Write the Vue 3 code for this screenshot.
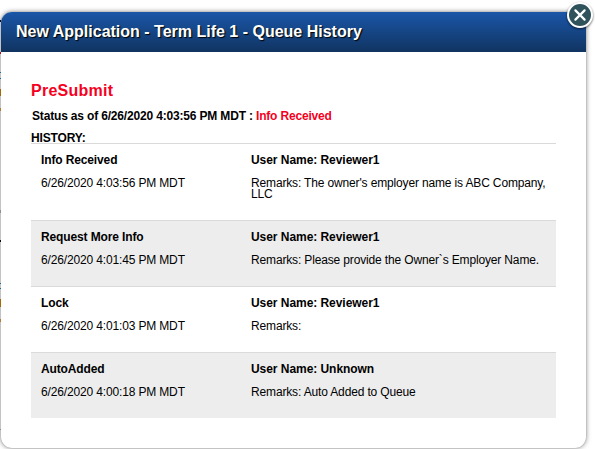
<script setup>
const entries = [
  { action: 'Info Received', time: '6/26/2020 4:03:56 PM MDT', user: 'Reviewer1', remarks: "The owner's employer name is ABC Company, LLC" },
  { action: 'Request More Info', time: '6/26/2020 4:01:45 PM MDT', user: 'Reviewer1', remarks: 'Please provide the Owner`s Employer Name.' },
  { action: 'Lock', time: '6/26/2020 4:01:03 PM MDT', user: 'Reviewer1', remarks: '' },
  { action: 'AutoAdded', time: '6/26/2020 4:00:18 PM MDT', user: 'Unknown', remarks: 'Auto Added to Queue' },
]
</script>

<template>
  <div class="page">
    <section class="dialog">
      <header class="titlebar"><h1>New Application - Term Life 1 - Queue History</h1></header>
      <div class="body">
        <h2>PreSubmit</h2>
        <p class="status"><span class="asof">Status as of 6/26/2020 4:03:56 PM MDT :</span> <span class="state">Info Received</span></p>
        <p class="label">HISTORY:</p>
        <ul class="history">
          <li v-for="e in entries" :key="e.time" class="entry">
            <div class="col">
              <strong class="action">{{ e.action }}</strong>
              <span class="text">{{ e.time }}</span>
            </div>
            <div class="col">
              <strong class="user">User Name: {{ e.user }}</strong>
              <span class="text">Remarks: {{ e.remarks }}</span>
            </div>
          </li>
        </ul>
      </div>
      <button class="close" aria-label="Close">
        <svg width="28" height="28" viewBox="0 0 28 28">
          <circle cx="14" cy="14" r="12" fill="#30535b" stroke="#fff" stroke-width="2" />
          <path d="M9.4 9.4 18.6 18.6M18.6 9.4 9.4 18.6" stroke="#fff" stroke-width="2.2" stroke-linecap="round" />
        </svg>
      </button>
    </section>
  </div>
</template>

<style>
body { background: #fff; }
</style>

<style scoped>
.page {
  box-sizing: border-box;
  width: 596px;
  height: 449px;
  padding: 12px 10px 1px 1px;
  overflow: hidden;
  font-family: "Liberation Sans", Arial, sans-serif;
  font-size: 12px;
  color: #000;
  background: linear-gradient(
    #fff 20px, #111 20px 22px, #fff 22px 52px, #e4162c 52px 54px, #fff 54px 72px,
    #1e8fd4 72px 73px, #fff 73px 78px, #1e8fd4 78px 79px, #fff 79px 89px,
    #d48a10 89px 96px, #fff 96px 108px, #e9a242 108px 111px, #fff 111px 210px,
    #bbb 210px 213px, #fff 213px 240px, #111 240px 242px, #fff 242px 283px,
    #1e8fd4 283px 284px, #fff 284px 288px, #1e8fd4 288px 289px, #fff 289px 299px,
    #d48a10 299px 307px, #fff 307px 319px, #e9a242 319px 322px, #fff 322px 429px,
    #bbb 429px 430px, #fff 430px
  ) 0 0 / 1px 100% no-repeat #fff;
}
.dialog {
  position: relative;
  height: 436px;
  border-radius: 11px;
  background: #fff;
  box-shadow: 0 0 1px rgba(0, 0, 0, 0.3), 0 0 5px rgba(0, 0, 0, 0.5);
}
.titlebar {
  height: 40px;
  border-radius: 11px 11px 0 0;
  background: linear-gradient(#1b56a8, #103461);
}
h1, h2, p, ul { margin: 0; padding: 0; }
h1 {
  padding-left: 15px;
  font-size: 16px;
  line-height: 39px;
  color: #fff;
  text-shadow: 1px 1px 1px #000;
  white-space: nowrap;
}
.body { padding: 29px 30px 0; }
h2 {
  font-size: 16px;
  line-height: 20px;
  letter-spacing: 0.25px;
  color: #f5001d;
}
.status {
  padding: 7px 0 0 1px;
  line-height: 16px;
  font-weight: bold;
  letter-spacing: -0.17px;
  white-space: nowrap;
}
.state { color: #f5001d; }
.label {
  padding-top: 8px;
  line-height: 13px;
  height: 11px;
  font-weight: bold;
  letter-spacing: -0.15px;
}
.history { list-style: none; }
.entry {
  box-sizing: border-box;
  display: grid;
  grid-template-columns: 210px 1fr;
  min-height: 66px;
  padding: 11px 0 20px 10px;
  border-top: 1px solid #dadada;
  line-height: 11px;
}
.entry:nth-child(even) { background: #ededed; }
.col {
  display: flex;
  flex-direction: column;
  gap: 12px;
}
.action { letter-spacing: -0.13px; }
.user { letter-spacing: -0.05px; }
.text { letter-spacing: -0.15px; }
.close {
  position: absolute;
  top: -11px;
  right: -8px;
  width: 28px;
  height: 28px;
  padding: 0;
  border: 0;
  border-radius: 50%;
  background: none;
}
.close svg { display: block; filter: drop-shadow(0 1px 1px rgba(0, 0, 0, 0.6)); }
</style>
